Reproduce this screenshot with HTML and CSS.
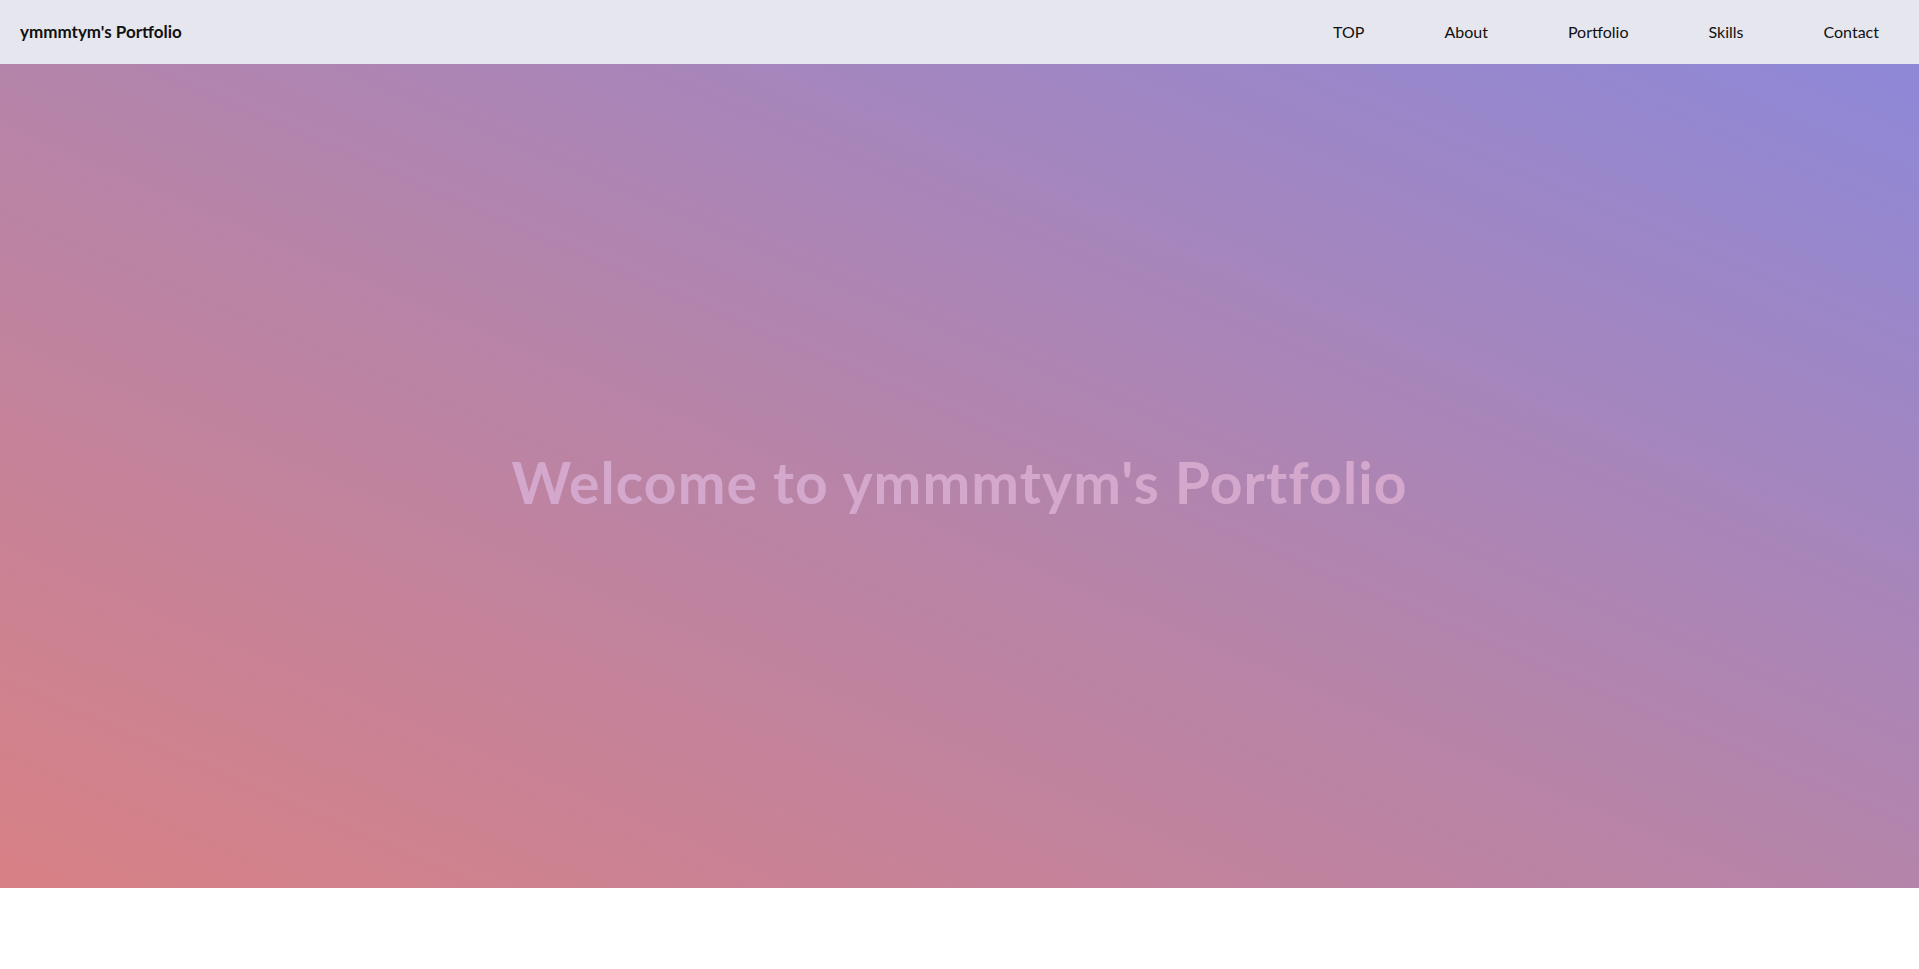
FILE: index.html
```html
<!DOCTYPE html>
<html lang="ja">
<head>
<meta charset="utf-8">
<title>ymmmtym's Portfolio</title>
<link rel="stylesheet" href="styles.css">
</head>
<body>
<header class="site-header">
  <div class="logo">ymmmtym's Portfolio</div>
  <nav class="nav">
    <ul class="nav-list">
      <li class="nav-item"><a href="#top">TOP</a></li>
      <li class="nav-item"><a href="#about">About</a></li>
      <li class="nav-item"><a href="#portfolio">Portfolio</a></li>
      <li class="nav-item"><a href="#skills">Skills</a></li>
      <li class="nav-item"><a href="#contact">Contact</a></li>
    </ul>
  </nav>
</header>
<section class="hero" id="top">
  <h1 class="hero-title">Welcome to ymmmtym's Portfolio</h1>
</section>
</body>
</html>
```
FILE: styles.css
```css
* { box-sizing: border-box; }
html, body { margin: 0; padding: 0; }
body {
  font-family: Lato, "Noto Sans", sans-serif;
  color: #111;
  background: #fff;
}
.site-header {
  height: 64px;
  background: #e6e6ef;
  display: flex;
  align-items: center;
  justify-content: space-between;
  padding-left: 20px;
  padding-bottom: 2px;
}
.logo {
  font-weight: 700;
  font-size: 17px;
  color: #111;
}
.nav-list {
  list-style: none;
  margin: 0;
  padding: 0;
  display: flex;
}
.nav-item a {
  display: block;
  padding: 0 40px;
  font-size: 16px;
  color: #111;
  text-decoration: none;
}
.hero {
  height: 824px;
  padding-top: 12px;
  background: linear-gradient(to top right, #d88185 0%, #b584aa 50%, #8e88d8 100%);
  display: flex;
  align-items: center;
  justify-content: center;
}
.hero-title {
  margin: 0;
  font-size: 57px;
  font-weight: 700;
  color: #d4a7cc;
  letter-spacing: 1.1px;
}
```
